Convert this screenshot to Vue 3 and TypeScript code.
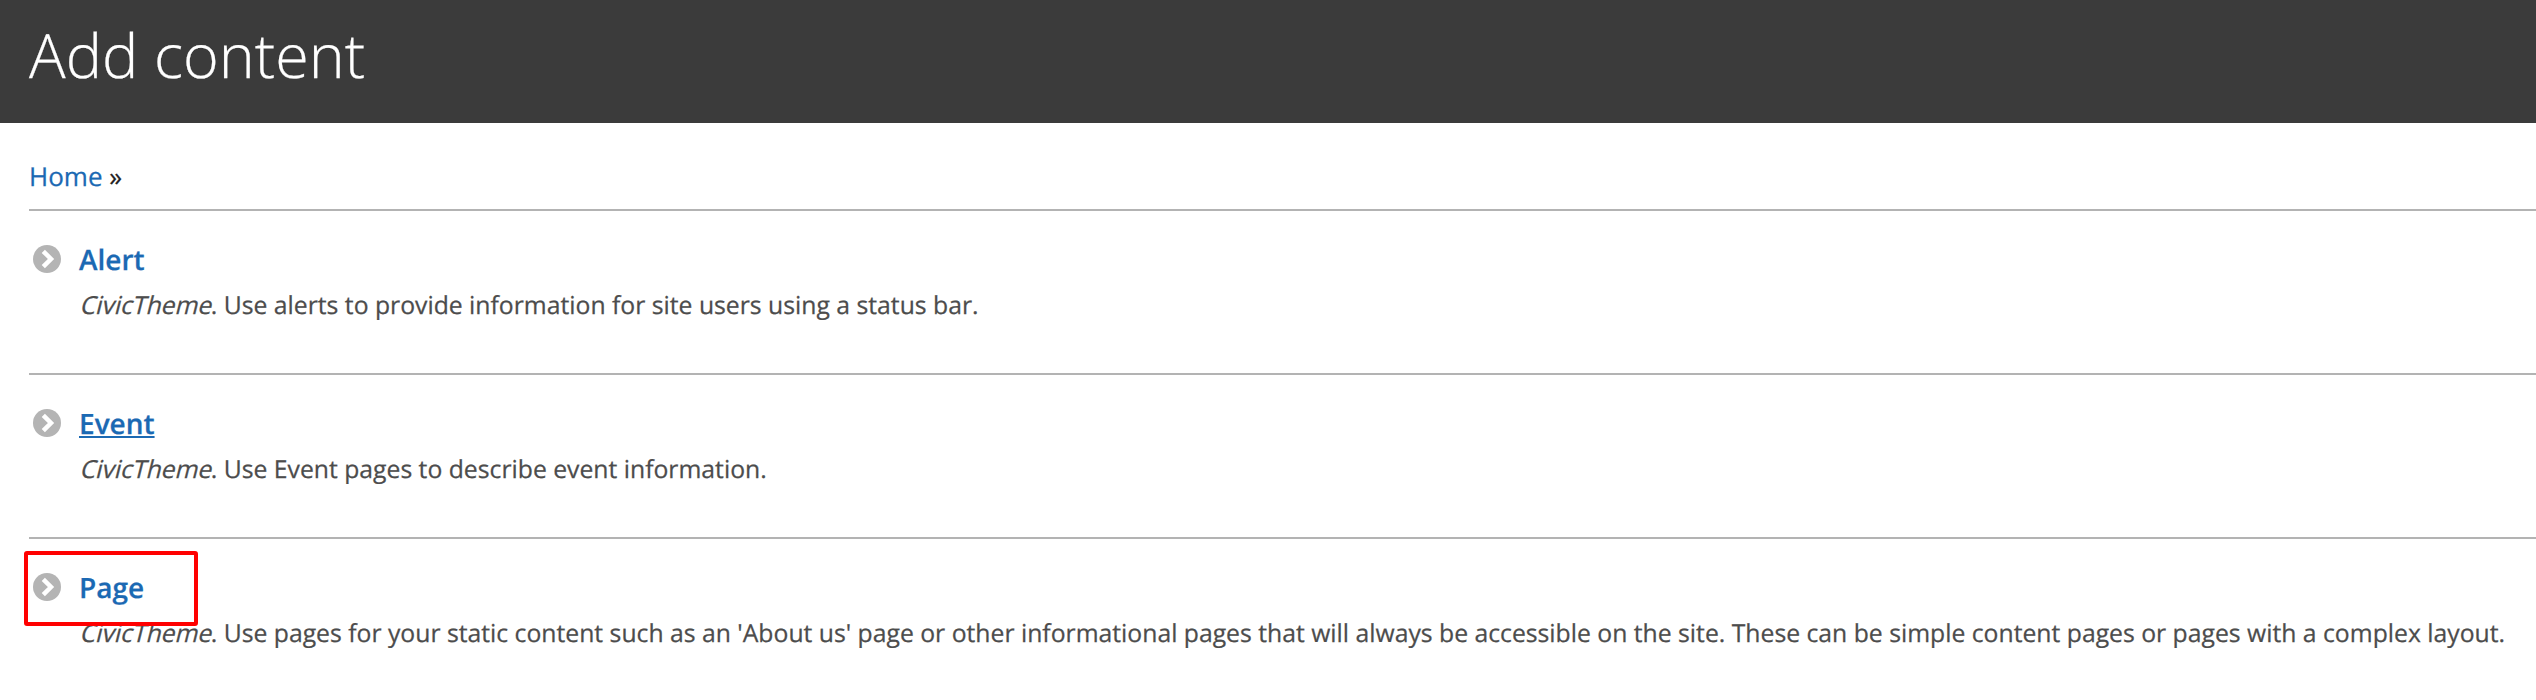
<script setup lang="ts">
interface ContentType { name: string; description: string; active?: boolean; marked?: boolean }
const types: ContentType[] = [
  { name: 'Alert', description: 'Use alerts to provide information for site users using a status bar.' },
  { name: 'Event', description: 'Use Event pages to describe event information.', active: true },
  { name: 'Page', description: "Use pages for your static content such as an 'About us' page or other informational pages that will always be accessible on the site. These can be simple content pages or pages with a complex layout.", marked: true },
]
</script>

<template>
  <div class="page">
    <header><h1>Add content</h1></header>
    <main>
      <nav><a>Home</a> »</nav>
      <ul>
        <li v-for="t in types" :key="t.name">
          <svg class="icon" viewBox="0 0 28 28"><circle cx="14" cy="14" r="14" fill="#b4b4b4" /><path d="M10.3 6.3 18 14 10.3 21.7" fill="none" stroke="#fff" stroke-width="4.5" /></svg>
          <div class="body">
            <a class="name" :class="{ active: t.active }">{{ t.name }}</a>
            <p><em>CivicTheme</em>. {{ t.description }}</p>
          </div>
          <span v-if="t.marked" class="marker"></span>
        </li>
      </ul>
    </main>
  </div>
</template>

<style>
body { margin: 0; background: #fff; }
</style>
<style scoped>
.page { height: 700px; overflow: hidden; font-family: "Open Sans", sans-serif; color: #4c4c4c; text-rendering: geometricPrecision; -webkit-text-stroke: 0.25px currentColor; }
header { height: 123px; background: #3b3b3b; }
h1 { margin: 0; padding: 11px 0 0 29px; font-size: 61px; line-height: 88px; font-weight: 300; color: #fff; }
main { padding-left: 29px; }
nav { height: 86px; box-sizing: border-box; padding-top: 35px; font-size: 26px; line-height: 36px; color: #222; }
a { color: #1b69b3; }
ul { margin: 0; padding: 0; list-style: none; }
li { position: relative; display: flex; height: 164px; box-sizing: border-box; border-top: 2px solid #b3b3b3; }
.icon { width: 28px; height: 28px; margin: 34px 18px 0 4px; flex: none; }
.name { display: block; width: max-content; margin-top: 30px; font-size: 28px; line-height: 38px; font-weight: 600; }
.active { text-decoration: underline; }
p { margin: 10px 0 0; font-size: 24.74px; line-height: 34px; white-space: nowrap; }
em { display: inline-block; font-style: normal; transform: skewX(-14deg); transform-origin: 0 26px; }
.marker { position: absolute; left: -5px; top: 12px; width: 174px; height: 75px; box-sizing: border-box; border: 4px solid #ff0000; border-radius: 3px; }
</style>
